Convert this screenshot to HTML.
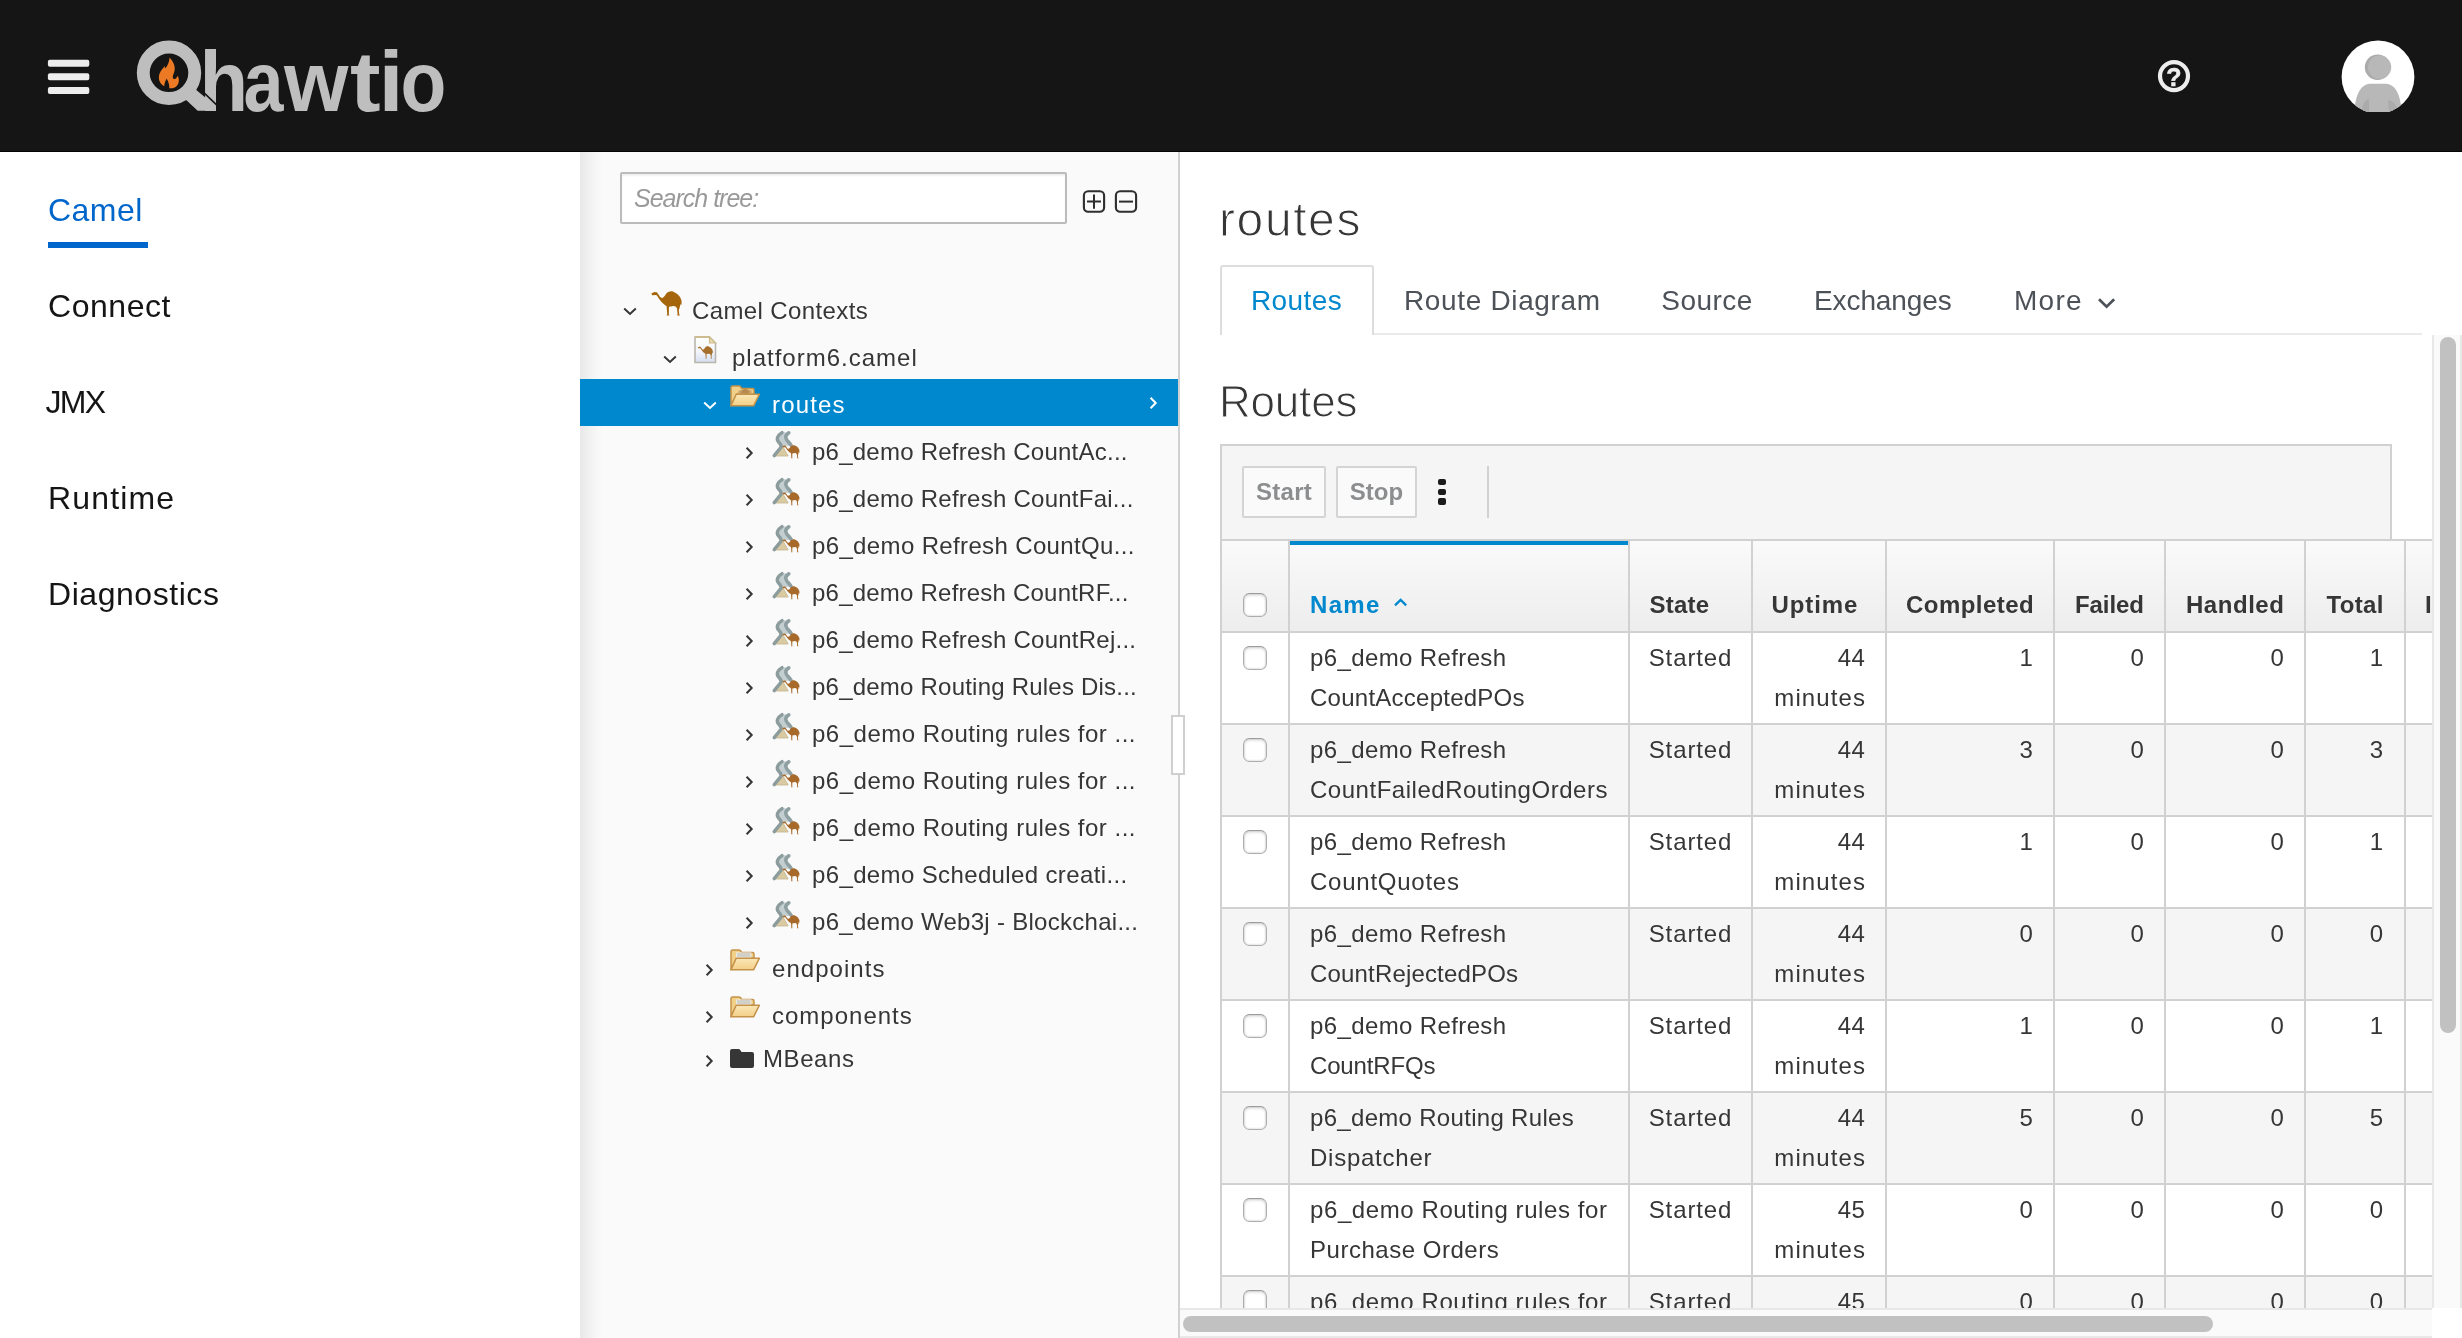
<!DOCTYPE html>
<html lang="en">
<head>
<meta charset="utf-8">
<title>hawtio - Camel routes</title>
<style>
*{box-sizing:border-box;margin:0;padding:0}
html,body{width:2462px;height:1338px;overflow:hidden;background:#fff}
body{font-family:"Liberation Sans",Arial,sans-serif;color:#363636;position:relative}
.abs{position:absolute}
#nav,#tree,#main,#hdr{will-change:transform}
/* ---------- header ---------- */
#hdr{position:absolute;left:0;top:0;width:2462px;height:152px;background:#151515;border-bottom:1px solid #050505}
#logo{position:absolute;left:130px;top:30px}
/* ---------- left nav ---------- */
#nav{position:absolute;left:0;top:152px;width:580px;height:1186px;background:#fff}
#nav a{position:absolute;left:48px;font-size:32px;line-height:40px;color:#151515;white-space:nowrap;letter-spacing:.2px}
#nav a.on{color:#0066cc}
#nav .ul{position:absolute;left:48px;top:90px;width:100px;height:6px;background:#0066cc}
/* ---------- tree ---------- */
#tree{position:absolute;left:580px;top:152px;width:598px;height:1186px;background:#fafafa}
#tree .shade{position:absolute;left:0;top:0;width:24px;height:100%;background:linear-gradient(to right,#e8e8e8,#f1f1f1 40%,#f8f8f8 75%,#fafafa)}
#split{position:absolute;left:1178px;top:152px;width:2px;height:1186px;background:#d1d1d1;z-index:3}
#grip{position:absolute;left:1171px;top:715px;width:14px;height:60px;background:#fff;border:2px solid #cfcfcf;z-index:4}
#search{position:absolute;left:40px;top:20px;width:447px;height:52px;border:2px solid #bbb;background:#fff;border-radius:2px;box-shadow:inset 0 2px 2px rgba(0,0,0,.06)}
#search span{position:absolute;left:12px;top:8px;font-size:25px;line-height:32px;font-style:italic;color:#999;white-space:nowrap;letter-spacing:-1px}
.row{position:absolute;left:0;width:598px;height:47px}
.row.sel{background:#0088ce}
.row .t{position:absolute;top:10px;font-size:24px;line-height:32px;color:#363636;white-space:nowrap;letter-spacing:.2px}
.row.sel .t{color:#fff}
.row svg{position:absolute}
/* ---------- main ---------- */
#main{position:absolute;left:1180px;top:152px;width:1282px;height:1186px;background:#fff;overflow:hidden}
/* ---------- main content ---------- */
#title{position:absolute;left:39px;top:40px;font-size:48px;line-height:56px;color:#363636;white-space:nowrap;letter-spacing:1.6px;-webkit-text-stroke:1.1px #fff}
#tabline{position:absolute;left:194px;top:181px;width:1048px;height:2px;background:#ebebeb}
#tabon{position:absolute;left:40px;top:113px;width:154px;height:70px;border:2px solid #ddd;border-bottom:0;border-radius:3px 3px 0 0;background:#fff}
.tab{position:absolute;top:131px;font-size:28px;line-height:36px;color:#4d5258;white-space:nowrap}
.tab.on{color:#0088ce}
#h2{position:absolute;left:39px;font-size:44px;line-height:52px;color:#363636;white-space:nowrap;letter-spacing:-.2px;-webkit-text-stroke:1px #fff}
#scroll{position:absolute;left:0;top:183px;width:1252px;height:973px;overflow:hidden}
#tb{position:absolute;left:40px;width:1172px;height:97px;border:2px solid #d1d1d1;background:#f5f5f5}
.btn{position:absolute;top:20px;height:52px;border:2px solid #d4d4d4;border-radius:2px;background:#fafafa;font-size:24px;font-weight:bold;line-height:48px;color:#8b8d8f;text-align:center;white-space:nowrap}
#keb i{position:absolute;left:216px;width:8.2px;height:6.4px;border-radius:2px;background:#1b1b1b}
#sep{position:absolute;left:265px;top:20px;width:2px;height:52px;background:#d1d1d1}
#ttop{position:absolute;left:40px;width:1300px;height:2px;background:#d1d1d1}
#thead{position:absolute;left:40px;width:1400px;height:92px;background:linear-gradient(to bottom,#fafafa,#ededed);border-bottom:2px solid #d1d1d1}
.vl{position:absolute;width:2px;height:800px;background:#d1d1d1}
.th{position:absolute;font-size:24px;font-weight:bold;line-height:32px;color:#363636;white-space:nowrap;letter-spacing:.25px}
.tr{position:absolute;left:42px;width:1400px;height:92px;border-bottom:2px solid #d1d1d1;background:#fff}
.tr.alt{background:#f5f5f5}
.td{position:absolute;top:5px;font-size:24px;line-height:40px;color:#363636;white-space:nowrap;letter-spacing:.25px}
.td.r{text-align:right}
.cb{position:absolute;width:24px;height:24px;border:1.3px solid #adadad;border-top-color:#9c9c9c;border-radius:6.5px;background:#fff;box-shadow:inset 0 0 1.5px 1px rgba(0,0,0,.10),inset 0 2px 3px rgba(0,0,0,.09)}
#hsb{position:absolute;left:0;top:1156px;width:1252px;height:30px;background:#fafafa;border-top:2px solid #e8e8e8;border-bottom:2px solid #e8e8e8}
#hsb i{position:absolute;left:3px;top:6px;width:1030px;height:16px;border-radius:8px;background:#c1c1c1}
#vsb{position:absolute;left:1252px;top:183px;width:30px;height:973px;background:#fafafa;border-left:2px solid #e8e8e8;border-right:2px solid #e8e8e8}
#vsb i{position:absolute;left:6px;top:2px;width:16px;height:696px;border-radius:8px;background:#c1c1c1}
</style>
</head>
<body>
<svg width="0" height="0" style="position:absolute">
  <defs>
    <linearGradient id="gdoc" x1="0" y1="0" x2="0" y2="1"><stop offset="0" stop-color="#ffffff"/><stop offset=".55" stop-color="#f4f6fb"/><stop offset="1" stop-color="#d5def0"/></linearGradient>
    <linearGradient id="gfold" x1="0" y1="0" x2="0" y2="1"><stop offset="0" stop-color="#fbe8b8"/><stop offset="1" stop-color="#f2cf86"/></linearGradient>
    <filter id="soft2" x="-10%" y="-10%" width="120%" height="120%"><feGaussianBlur stdDeviation="0.75"/></filter>
    <filter id="soft" x="-10%" y="-10%" width="120%" height="120%"><feGaussianBlur stdDeviation="0.55"/></filter>
    <path id="camelp" d="M0.3,2.4 L3.4,0.9 L5.8,1.2 C7.2,2.6 8.4,5.6 10.2,6.8 C12,7.4 13.4,5.4 14.8,3.2 C16.8,0.6 19.8,-0.2 22.4,0.7 C26,2.2 29.6,5.4 30.4,9.4 C30.8,11.6 30.6,13.2 30,14.6 L29.2,12.8 C29.2,15.2 28.6,17.2 27.8,19 L28.2,23.2 L29,24.5 L26.2,24.5 L26.6,23.2 L26,17.4 C25.2,15.8 24,15 22.6,15 L18,15.8 L17.8,23.2 L18.4,24.5 L15.6,24.5 L16.2,23.2 L15.6,15.2 C13,13.6 10.4,11.4 8.6,8.6 C7.2,6.6 6.4,4.8 5.2,4 L1.2,4.2 Z"/>
    <g id="i-camel"><use href="#camelp" fill="#a5660b"/></g>
    <g id="i-doc" filter="url(#soft)">
      <path d="M1,1 L15.5,1 L21.5,7 L21.5,26.5 L1,26.5 Z" fill="url(#gdoc)" stroke="#b9b6ad" stroke-width="1.6"/>
      <path d="M1,1 L15.5,1" stroke="#cdbb8c" stroke-width="1.8"/>
      <path d="M15.5,1 L15.5,7 L21.5,7 Z" fill="#e9dcae" stroke="#cdbb8c" stroke-width="1.2"/>
      <g transform="translate(3.6,10.2) scale(0.5)"><use href="#camelp" fill="#a66f2b"/></g>
    </g>
    <g id="i-folder" filter="url(#soft)">
      <path d="M1,19.5 L1,2.6 Q1,1 2.8,1 L9,1 Q10.4,1 11,2.4 L11.6,3.6 L22.6,3.6 Q24,3.6 24,5.2 L24,9 L7,9 Z" fill="#f1d08a" stroke="#c4934a" stroke-width="1.5"/>
      <path d="M6.2,9.2 L29.4,9.2 L23.6,20.8 L1,20.8 Z" fill="url(#gfold)" stroke="#c4934a" stroke-width="1.5" stroke-linejoin="round"/>
    </g>
    <g id="i-folderc"><use href="#i-folder"/><g filter="url(#soft)"><path d="M9,5.2 L21.5,5.2 L21.5,8.6 L8,8.6 Z" fill="#c9a36a"/><path d="M12,5 C14,3.6 17,3.8 19,5.6 L19,8.4 L11,8.4 Z" fill="#b98a4e"/></g></g>
    <g id="i-folderp"><g filter="url(#soft)"><path d="M1,19.5 L1,2.6 Q1,1 2.8,1 L9,1 Q10.4,1 11,2.4 L11.6,3.6 L22.6,3.6 Q24,3.6 24,5.2 L24,9 L7,9 Z" fill="#f1d08a" stroke="#c4934a" stroke-width="1.5"/><path d="M6,3.4 L21.4,3.4 L21.4,9 L6,9 Z" fill="#eceae4"/><path d="M7,5 L20.4,5 M7,7 L20.4,7" stroke="#b5b5ae" stroke-width="1.2"/><path d="M6.2,9.2 L29.4,9.2 L23.6,20.8 L1,20.8 Z" fill="url(#gfold)" stroke="#c4934a" stroke-width="1.5" stroke-linejoin="round"/></g></g>
    <g id="i-route" filter="url(#soft2)">
      <path d="M9.4,0.2 L16,0.4 C13.6,3 12.8,5 14.6,7.6 L18.6,13.4 L9.4,14.2 C9.6,12 8,10.4 6.2,8.8 C3.6,6.2 5.4,2.6 9.4,0.2 Z" fill="#c3ced1"/>
      <path d="M0.8,24 L9.2,13.6 L15.2,24 Z" fill="#d9caa2" stroke="#c2b48e" stroke-width="0.8"/>
      <path d="M9,0.6 C4.4,3.4 3,7 5.6,10 C7.6,12 8.8,13.4 8,15.4 L1.2,23.6" fill="none" stroke="#8c9b9c" stroke-width="3.4" stroke-linecap="round"/>
      <path d="M15.8,0.8 C12.6,3.2 12,5.6 13.8,8 C15.4,10 17,11.4 18,13.2" fill="none" stroke="#8fa0a3" stroke-width="3.6" stroke-linecap="round"/>
      <g transform="translate(9.2,13) scale(0.565,0.54)"><use href="#camelp" fill="#a86a2a"/></g>
    </g>
    <path id="cv-d" d="M1.2,1.6 L7,7 L12.8,1.6" fill="none" stroke-width="2" stroke-linecap="butt" stroke-linejoin="miter"/>
    <path id="cv-r" d="M1.6,1.7 L6.7,7 L1.6,12.3" fill="none" stroke-width="2" stroke-linecap="butt" stroke-linejoin="miter"/>
  </defs>
</svg>
<div id="hdr">
  <svg id="burger" style="position:absolute;left:40px;top:50px" width="60" height="52" viewBox="40 50 60 52"><rect x="47.9" y="59.7" width="41.4" height="7" rx="2" fill="#ededed"/><rect x="47.9" y="73.3" width="41.4" height="6.9" rx="2" fill="#ededed"/><rect x="47.9" y="86.9" width="41.4" height="7" rx="2" fill="#ededed"/></svg>
  <svg id="logo" style="position:absolute;left:120px;top:20px" width="340" height="110" viewBox="120 20 340 110">
    <circle cx="169" cy="72.8" r="25.75" fill="none" stroke="#bebebe" stroke-width="12.9"/>
    <polygon points="184,98 194.5,88.5 215.8,106.2 215.8,110.8 197.7,110.8" fill="#bebebe"/>
    <g transform="translate(125,30) scale(0.08123)" fill="#ec7a24">
      <path d="M548,338 C585,375 618,430 612,490 C608,530 585,560 588,585 C592,605 618,612 632,592 C640,580 645,570 650,562 C668,600 670,650 640,685 C615,712 575,722 545,716 C548,690 540,640 512,598 C498,630 482,660 484,692 C440,672 412,625 418,570 C424,515 462,480 490,440 C488,455 490,465 496,472 C525,440 548,390 548,338 Z"/>
    </g>
    <text y="110.8" font-family="Liberation Sans, Arial, sans-serif" font-weight="bold" font-size="86" fill="#bebebe"><tspan x="199.4" textLength="48.7" lengthAdjust="spacingAndGlyphs">h</tspan><tspan x="243.5" textLength="40" lengthAdjust="spacingAndGlyphs">a</tspan><tspan x="284" textLength="64.4" lengthAdjust="spacingAndGlyphs">w</tspan><tspan x="349.9" textLength="30.6" lengthAdjust="spacingAndGlyphs">t</tspan><tspan x="378.4" textLength="25.1" lengthAdjust="spacingAndGlyphs">i</tspan><tspan x="400.4" textLength="45.9" lengthAdjust="spacingAndGlyphs">o</tspan></text>
    <line x1="203.8" y1="92.6" x2="216.6" y2="104.8" stroke="#151515" stroke-width="1.6"/>
  </svg>
  <svg style="position:absolute;left:2154px;top:56px" width="40" height="40" viewBox="0 0 40 40">
    <circle cx="20" cy="20.1" r="14" fill="none" stroke="#ededed" stroke-width="4.2"/>
    <text x="19.8" y="29.6" text-anchor="middle" font-family="Liberation Sans, Arial, sans-serif" font-weight="bold" font-size="25" fill="#ededed" stroke="#ededed" stroke-width=".5">?</text>
  </svg>
  <svg style="position:absolute;left:2340px;top:39px" width="76" height="76" viewBox="0 0 76 76">
    <defs><clipPath id="avc"><circle cx="38" cy="38" r="36.4"/></clipPath></defs>
    <g clip-path="url(#avc)">
      <rect x="0" y="0" width="76" height="73" fill="#fff"/>
      <circle cx="37.6" cy="28.2" r="12.8" fill="#ababab"/>
      <circle cx="39.6" cy="28.2" r="11.6" fill="#b8b8b8"/>
      <path d="M14.4,73 C15,58 20,45 30,44.8 L46,44.8 C56,45 61,58 61.4,73 Z" fill="#b8b8b8"/>
      <path d="M22,73 C22,65 25,61 29,60 L29,73 Z" fill="#ababab"/>
      <path d="M49,73 L48,61 C54,62 57,66 57,73 Z" fill="#ababab"/>
    </g>
  </svg>
</div>
<div id="nav">
  <a class="on" style="top:38px;letter-spacing:.45px">Camel</a><div class="ul"></div>
  <a style="top:134px;letter-spacing:.55px">Connect</a>
  <a style="top:230px;left:45.5px;letter-spacing:-1.7px">JMX</a>
  <a style="top:326px;letter-spacing:1.15px">Runtime</a>
  <a style="top:422px;letter-spacing:.55px">Diagnostics</a>
</div>
<div id="tree">
  <div class="shade"></div>
  <div id="search"><span>Search tree:</span></div>
  <svg class="abs" style="left:502px;top:38px" width="24" height="24" viewBox="0 0 24 24"><rect x="1.9" y="1.3" width="20.2" height="20.5" rx="4.2" fill="none" stroke="#2e2e2e" stroke-width="2.1"/><path d="M5,11.6 L19,11.6 M12,4.6 L12,18.8" stroke="#2e2e2e" stroke-width="2"/></svg>
  <svg class="abs" style="left:534.4px;top:38px" width="24" height="24" viewBox="0 0 24 24"><rect x="1.9" y="1.3" width="20.2" height="20.5" rx="4.2" fill="none" stroke="#2e2e2e" stroke-width="2.1"/><path d="M5,11.6 L19,11.6" stroke="#2e2e2e" stroke-width="2"/></svg>
  <div class="row" style="top:133px"><svg style="left:43.0px;top:22.3px" width="14" height="9" viewBox="0 0 14 9"><use href="#cv-d" stroke="#363636"/></svg><svg style="left:71.0px;top:6.0px" width="32" height="26" viewBox="0 0 32 26" overflow="visible"><use href="#i-camel"/></svg><span class="t" style="left:112px;letter-spacing:0.39px">Camel Contexts</span></div>
  <div class="row" style="top:180px"><svg style="left:83.0px;top:22.5px" width="14" height="9" viewBox="0 0 14 9"><use href="#cv-d" stroke="#363636"/></svg><svg style="left:114.0px;top:4.0px" width="23" height="28" viewBox="0 0 23 28" overflow="visible"><use href="#i-doc"/></svg><span class="t" style="left:152px;letter-spacing:1.0px">platform6.camel</span></div>
  <div class="row sel" style="top:227px"><svg style="left:123.0px;top:22.4px" width="14" height="9" viewBox="0 0 14 9"><use href="#cv-d" stroke="#fff"/></svg><svg style="left:150.0px;top:6.0px" width="31" height="22" viewBox="0 0 31 22" overflow="visible"><use href="#i-folderc"/></svg><span class="t" style="left:192px;letter-spacing:1.15px">routes</span><svg style="left:568.8px;top:17.4px" width="9" height="14" viewBox="0 0 9 14"><use href="#cv-r" stroke="#fff"/></svg></div>
  <div class="row" style="top:274px"><svg style="left:165.3px;top:20.0px" width="9" height="14" viewBox="0 0 9 14"><use href="#cv-r" stroke="#363636"/></svg><svg style="left:193.4px;top:5.6px" width="27" height="26" viewBox="0 0 27 26" overflow="visible"><use href="#i-route"/></svg><span class="t" style="left:232px;letter-spacing:0.24px">p6_demo Refresh CountAc...</span></div>
  <div class="row" style="top:321px"><svg style="left:165.3px;top:20.0px" width="9" height="14" viewBox="0 0 9 14"><use href="#cv-r" stroke="#363636"/></svg><svg style="left:193.4px;top:5.6px" width="27" height="26" viewBox="0 0 27 26" overflow="visible"><use href="#i-route"/></svg><span class="t" style="left:232px;letter-spacing:0.25px">p6_demo Refresh CountFai...</span></div>
  <div class="row" style="top:368px"><svg style="left:165.3px;top:20.0px" width="9" height="14" viewBox="0 0 9 14"><use href="#cv-r" stroke="#363636"/></svg><svg style="left:193.4px;top:5.6px" width="27" height="26" viewBox="0 0 27 26" overflow="visible"><use href="#i-route"/></svg><span class="t" style="left:232px;letter-spacing:0.36px">p6_demo Refresh CountQu...</span></div>
  <div class="row" style="top:415px"><svg style="left:165.3px;top:20.0px" width="9" height="14" viewBox="0 0 9 14"><use href="#cv-r" stroke="#363636"/></svg><svg style="left:193.4px;top:5.6px" width="27" height="26" viewBox="0 0 27 26" overflow="visible"><use href="#i-route"/></svg><span class="t" style="left:232px;letter-spacing:0.22px">p6_demo Refresh CountRF...</span></div>
  <div class="row" style="top:462px"><svg style="left:165.3px;top:20.0px" width="9" height="14" viewBox="0 0 9 14"><use href="#cv-r" stroke="#363636"/></svg><svg style="left:193.4px;top:5.6px" width="27" height="26" viewBox="0 0 27 26" overflow="visible"><use href="#i-route"/></svg><span class="t" style="left:232px;letter-spacing:0.25px">p6_demo Refresh CountRej...</span></div>
  <div class="row" style="top:509px"><svg style="left:165.3px;top:20.0px" width="9" height="14" viewBox="0 0 9 14"><use href="#cv-r" stroke="#363636"/></svg><svg style="left:193.4px;top:5.6px" width="27" height="26" viewBox="0 0 27 26" overflow="visible"><use href="#i-route"/></svg><span class="t" style="left:232px;letter-spacing:0.22px">p6_demo Routing Rules Dis...</span></div>
  <div class="row" style="top:556px"><svg style="left:165.3px;top:20.0px" width="9" height="14" viewBox="0 0 9 14"><use href="#cv-r" stroke="#363636"/></svg><svg style="left:193.4px;top:5.6px" width="27" height="26" viewBox="0 0 27 26" overflow="visible"><use href="#i-route"/></svg><span class="t" style="left:232px;letter-spacing:0.5px">p6_demo Routing rules for ...</span></div>
  <div class="row" style="top:603px"><svg style="left:165.3px;top:20.0px" width="9" height="14" viewBox="0 0 9 14"><use href="#cv-r" stroke="#363636"/></svg><svg style="left:193.4px;top:5.6px" width="27" height="26" viewBox="0 0 27 26" overflow="visible"><use href="#i-route"/></svg><span class="t" style="left:232px;letter-spacing:0.5px">p6_demo Routing rules for ...</span></div>
  <div class="row" style="top:650px"><svg style="left:165.3px;top:20.0px" width="9" height="14" viewBox="0 0 9 14"><use href="#cv-r" stroke="#363636"/></svg><svg style="left:193.4px;top:5.6px" width="27" height="26" viewBox="0 0 27 26" overflow="visible"><use href="#i-route"/></svg><span class="t" style="left:232px;letter-spacing:0.5px">p6_demo Routing rules for ...</span></div>
  <div class="row" style="top:697px"><svg style="left:165.3px;top:20.0px" width="9" height="14" viewBox="0 0 9 14"><use href="#cv-r" stroke="#363636"/></svg><svg style="left:193.4px;top:5.6px" width="27" height="26" viewBox="0 0 27 26" overflow="visible"><use href="#i-route"/></svg><span class="t" style="left:232px;letter-spacing:0.37px">p6_demo Scheduled creati...</span></div>
  <div class="row" style="top:744px"><svg style="left:165.3px;top:20.0px" width="9" height="14" viewBox="0 0 9 14"><use href="#cv-r" stroke="#363636"/></svg><svg style="left:193.4px;top:5.6px" width="27" height="26" viewBox="0 0 27 26" overflow="visible"><use href="#i-route"/></svg><span class="t" style="left:232px;letter-spacing:0.28px">p6_demo Web3j - Blockchai...</span></div>
  <div class="row" style="top:791px"><svg style="left:125.3px;top:20.0px" width="9" height="14" viewBox="0 0 9 14"><use href="#cv-r" stroke="#363636"/></svg><svg style="left:150.0px;top:5.7px" width="31" height="22" viewBox="0 0 31 22" overflow="visible"><use href="#i-folderp"/></svg><span class="t" style="left:192px;letter-spacing:1.05px">endpoints</span></div>
  <div class="row" style="top:838px"><svg style="left:125.3px;top:20.0px" width="9" height="14" viewBox="0 0 9 14"><use href="#cv-r" stroke="#363636"/></svg><svg style="left:150.0px;top:5.7px" width="31" height="22" viewBox="0 0 31 22" overflow="visible"><use href="#i-folderp"/></svg><span class="t" style="left:192px;letter-spacing:1.0px">components</span></div>
  <div class="row" style="top:885px"><svg style="left:125.3px;top:17.0px" width="9" height="14" viewBox="0 0 9 14"><use href="#cv-r" stroke="#363636"/></svg><svg style="left:150px;top:12px" width="24" height="19" viewBox="0 0 24 19"><path d="M0,2 Q0,0 2,0 L8.6,0 Q9.6,0 10.2,0.9 L11.6,3 L22,3 Q24,3 24,5 L24,17 Q24,19 22,19 L2,19 Q0,19 0,17 Z" fill="#363636"/></svg><span class="t" style="left:183px;letter-spacing:0.57px;top:6px">MBeans</span></div>
</div><!--/tree-->
<div id="split"></div>
<div id="main">
<div id="title">routes</div>
<div id="tabline"></div><div id="tabon"></div>
<span class="tab on" style="left:71px;letter-spacing:0.4px">Routes</span>
<span class="tab" style="left:224px;letter-spacing:0.65px">Route Diagram</span>
<span class="tab" style="left:481.29999999999995px;letter-spacing:0.45px">Source</span>
<span class="tab" style="left:634px;letter-spacing:-0.1px">Exchanges</span>
<span class="tab" style="left:834px;letter-spacing:1.3px">More</span>
<svg class="abs" style="left:917px;top:145px" width="20" height="13" viewBox="0 0 20 13"><path d="M2,2.2 L9.6,9.6 L17.2,2.2" fill="none" stroke="#4d5258" stroke-width="2.7"/></svg>
<div id="scroll">
<div id="h2" style="top:40.5px">Routes</div>
<div id="tb" style="top:109px"><div class="btn" style="left:20px;width:84px;letter-spacing:.3px">Start</div><div class="btn" style="left:114px;width:81px">Stop</div><div id="keb"><i style="top:32.60000000000002px"></i><i style="top:42.60000000000002px"></i><i style="top:52.39999999999998px"></i></div><div id="sep"></div></div>
<div id="ttop" style="top:204px"></div>
<div id="thead" style="top:206px"></div>
<div class="abs" style="left:110px;top:206px;width:338px;height:4px;background:#0088ce"></div>
<div class="cb" style="left:63px;top:258px"></div>
<span class="th" style="left:130px;top:254.20000000000005px;color:#0088ce;letter-spacing:1.3px">Name</span>
<svg class="abs" style="left:213px;top:261.5px" width="16" height="11" viewBox="0 0 16 11"><path d="M2,8.4 L7.6,2.9 L13.2,8.4" fill="none" stroke="#0088ce" stroke-width="2.2"/></svg>
<span class="th" style="left:469.5px;top:254.20000000000005px;letter-spacing:0.25px">State</span>
<span class="th" style="left:591.5px;top:254.20000000000005px;letter-spacing:0.9px">Uptime</span>
<span class="th" style="left:726px;top:254.20000000000005px;letter-spacing:0.45px">Completed</span>
<span class="th" style="left:895px;top:254.20000000000005px;letter-spacing:-0.1px">Failed</span>
<span class="th" style="left:1006px;top:254.20000000000005px;letter-spacing:0.54px">Handled</span>
<span class="th" style="left:1146.5px;top:254.20000000000005px;letter-spacing:0.35px">Total</span>
<span class="th" style="left:1245px;top:254.20000000000005px;letter-spacing:0.25px">Inflight</span>
<div class="tr" style="top:298px"><div class="cb" style="left:21px;top:13px"></div><div class="td" style="left:88px"><span style="letter-spacing:0.38px">p6_demo Refresh</span><br><span style="letter-spacing:0.25px">CountAcceptedPOs</span></div><div class="td" style="left:426.70000000000005px;letter-spacing:.9px">Started</div><div class="td r" style="left:443px;width:200px">44<br><span style="letter-spacing:1.1px;margin-right:-1.1px">minutes</span></div><div class="td r" style="left:611px;width:200px">1</div><div class="td r" style="left:722px;width:200px">0</div><div class="td r" style="left:862px;width:200px">0</div><div class="td r" style="left:961.4px;width:200px">1</div></div>
<div class="tr alt" style="top:390px"><div class="cb" style="left:21px;top:13px"></div><div class="td" style="left:88px"><span style="letter-spacing:0.38px">p6_demo Refresh</span><br><span style="letter-spacing:0.52px">CountFailedRoutingOrders</span></div><div class="td" style="left:426.70000000000005px;letter-spacing:.9px">Started</div><div class="td r" style="left:443px;width:200px">44<br><span style="letter-spacing:1.1px;margin-right:-1.1px">minutes</span></div><div class="td r" style="left:611px;width:200px">3</div><div class="td r" style="left:722px;width:200px">0</div><div class="td r" style="left:862px;width:200px">0</div><div class="td r" style="left:961.4px;width:200px">3</div></div>
<div class="tr" style="top:482px"><div class="cb" style="left:21px;top:13px"></div><div class="td" style="left:88px"><span style="letter-spacing:0.38px">p6_demo Refresh</span><br><span style="letter-spacing:0.75px">CountQuotes</span></div><div class="td" style="left:426.70000000000005px;letter-spacing:.9px">Started</div><div class="td r" style="left:443px;width:200px">44<br><span style="letter-spacing:1.1px;margin-right:-1.1px">minutes</span></div><div class="td r" style="left:611px;width:200px">1</div><div class="td r" style="left:722px;width:200px">0</div><div class="td r" style="left:862px;width:200px">0</div><div class="td r" style="left:961.4px;width:200px">1</div></div>
<div class="tr alt" style="top:574px"><div class="cb" style="left:21px;top:13px"></div><div class="td" style="left:88px"><span style="letter-spacing:0.38px">p6_demo Refresh</span><br><span style="letter-spacing:0.17px">CountRejectedPOs</span></div><div class="td" style="left:426.70000000000005px;letter-spacing:.9px">Started</div><div class="td r" style="left:443px;width:200px">44<br><span style="letter-spacing:1.1px;margin-right:-1.1px">minutes</span></div><div class="td r" style="left:611px;width:200px">0</div><div class="td r" style="left:722px;width:200px">0</div><div class="td r" style="left:862px;width:200px">0</div><div class="td r" style="left:961.4px;width:200px">0</div></div>
<div class="tr" style="top:666px"><div class="cb" style="left:21px;top:13px"></div><div class="td" style="left:88px"><span style="letter-spacing:0.38px">p6_demo Refresh</span><br><span style="letter-spacing:-0.16px">CountRFQs</span></div><div class="td" style="left:426.70000000000005px;letter-spacing:.9px">Started</div><div class="td r" style="left:443px;width:200px">44<br><span style="letter-spacing:1.1px;margin-right:-1.1px">minutes</span></div><div class="td r" style="left:611px;width:200px">1</div><div class="td r" style="left:722px;width:200px">0</div><div class="td r" style="left:862px;width:200px">0</div><div class="td r" style="left:961.4px;width:200px">1</div></div>
<div class="tr alt" style="top:758px"><div class="cb" style="left:21px;top:13px"></div><div class="td" style="left:88px"><span style="letter-spacing:0.31px">p6_demo Routing Rules</span><br><span style="letter-spacing:0.75px">Dispatcher</span></div><div class="td" style="left:426.70000000000005px;letter-spacing:.9px">Started</div><div class="td r" style="left:443px;width:200px">44<br><span style="letter-spacing:1.1px;margin-right:-1.1px">minutes</span></div><div class="td r" style="left:611px;width:200px">5</div><div class="td r" style="left:722px;width:200px">0</div><div class="td r" style="left:862px;width:200px">0</div><div class="td r" style="left:961.4px;width:200px">5</div></div>
<div class="tr" style="top:850px"><div class="cb" style="left:21px;top:13px"></div><div class="td" style="left:88px"><span style="letter-spacing:0.59px">p6_demo Routing rules for</span><br><span style="letter-spacing:0.52px">Purchase Orders</span></div><div class="td" style="left:426.70000000000005px;letter-spacing:.9px">Started</div><div class="td r" style="left:443px;width:200px">45<br><span style="letter-spacing:1.1px;margin-right:-1.1px">minutes</span></div><div class="td r" style="left:611px;width:200px">0</div><div class="td r" style="left:722px;width:200px">0</div><div class="td r" style="left:862px;width:200px">0</div><div class="td r" style="left:961.4px;width:200px">0</div></div>
<div class="tr alt" style="top:942px"><div class="cb" style="left:21px;top:13px"></div><div class="td" style="left:88px"><span style="letter-spacing:0.59px">p6_demo Routing rules for</span><br><span style="letter-spacing:0.5px">Quotes</span></div><div class="td" style="left:426.70000000000005px;letter-spacing:.9px">Started</div><div class="td r" style="left:443px;width:200px">45<br><span style="letter-spacing:1.1px;margin-right:-1.1px">minutes</span></div><div class="td r" style="left:611px;width:200px">0</div><div class="td r" style="left:722px;width:200px">0</div><div class="td r" style="left:862px;width:200px">0</div><div class="td r" style="left:961.4px;width:200px">0</div></div>
<div class="vl" style="left:40px;top:206px"></div>
<div class="vl" style="left:108px;top:206px"></div>
<div class="vl" style="left:448px;top:206px"></div>
<div class="vl" style="left:571px;top:206px"></div>
<div class="vl" style="left:705px;top:206px"></div>
<div class="vl" style="left:873px;top:206px"></div>
<div class="vl" style="left:984px;top:206px"></div>
<div class="vl" style="left:1124px;top:206px"></div>
<div class="vl" style="left:1224px;top:206px"></div>
</div>
<div id="vsb"><i></i></div><div id="hsb"><i></i></div>
</div>
<div id="grip"></div>
</body>
</html>
